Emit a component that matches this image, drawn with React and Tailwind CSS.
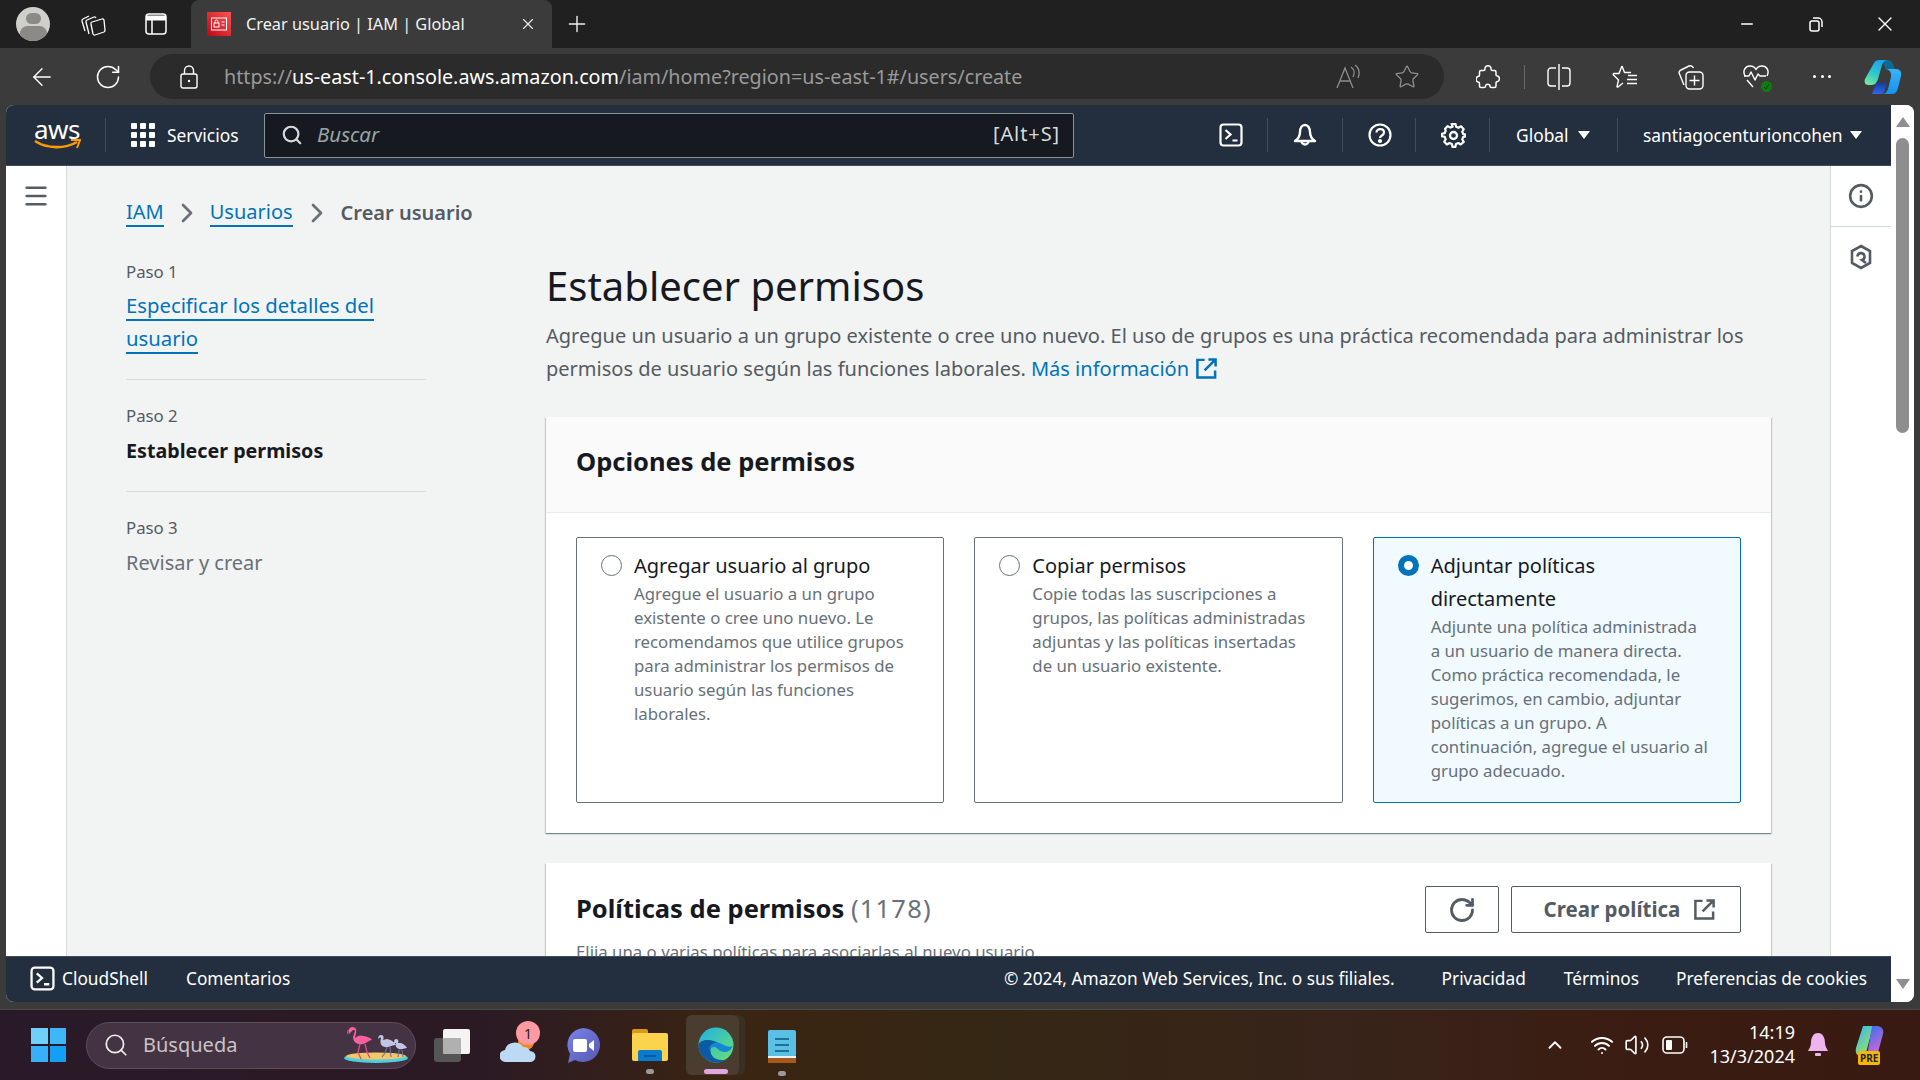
import React from 'react';
import { ArrowLeft, RotateCw, Star, X, Plus, Minus, Search, Menu, Info, Wifi, Volume2, ChevronUp, ChevronRight } from 'lucide-react';

const font = "font-['Noto_Sans','Open_Sans',sans-serif]";

function Divider({ className = '' }) {
  return <div className={`h-[34px] w-px shrink-0 bg-[#414d5c] ${className}`} />;
}

function Tri({ className = '' }) {
  return (
    <svg width="14" height="10" viewBox="0 0 14 10" className={`shrink-0 ${className}`}>
      <path d="M1 1h12L7 9z" fill="#fff" />
    </svg>
  );
}

function ShellIcon({ size = 24 }) {
  return (
    <svg width={size} height={size} viewBox="0 0 24 24" fill="none" stroke="#fff" strokeWidth="2.2">
      <rect x="1.500" y="1.500" width="21" height="21" rx="3" />
      <path d="M6.500 7 11.500 11.500 6.500 16M13.500 17.500h5" />
    </svg>
  );
}

function ExtIcon({ color, size = 24 }) {
  return (
    <svg width={size} height={size} viewBox="0 0 24 24" fill="none" stroke={color} strokeWidth="2.6" className="block">
      <path d="M10 3H2.500v18.500H21V14M14 2.500h7.500V10M21 3 10 14" />
    </svg>
  );
}

function TabStrip() {
  return (
    <div className="flex h-12 items-center bg-[#202020] text-white">
      <div className="ml-4 flex h-[34px] w-[34px] flex-col items-center overflow-hidden rounded-full bg-[#cfcfcb]">
        <div className="mt-[6px] h-[15px] w-[15px] rounded-full bg-[#8c8a86]" />
        <div className="mt-[2px] h-[20px] w-[27px] rounded-full bg-[#8c8a86]" />
      </div>
      <svg className="ml-[30px]" width="26" height="26" viewBox="0 0 26 26" fill="none" stroke="#fff" strokeWidth="1.3" strokeLinejoin="round">
        <path d="M5 20 2 10c-.3-1 0-1.500 1-2l6-3" />
        <path d="M9 23 6 11c-.3-1 0-1.500 1-2l7-3c1-.4 1.500 0 2 1" />
        <path d="M12 11l10-3c1-.3 1.500 0 2 1l1 10c0 1-.3 1.500-1 2l-9 3c-1 .3-1.500 0-2-1l-2-10c-.3-1 0-1.700 1-2z" />
      </svg>
      <svg className="ml-[39px]" width="22" height="22" viewBox="0 0 22 22" fill="none" stroke="#fff" strokeWidth="1.5">
        <rect x="1" y="1" width="20" height="20" rx="3" />
        <path d="M1 5h20" strokeWidth="5" />
        <path d="M7 7v14" />
      </svg>
      <div className="ml-[24px] flex h-12 w-[361px] items-center self-end rounded-t-lg bg-[#3b3b3b] pl-4">
        <svg width="24" height="24" viewBox="0 0 24 24">
          <defs><linearGradient id="fav" x1="0" y1="1" x2="1" y2="0"><stop offset="0" stopColor="#bd0816" /><stop offset="1" stopColor="#ff5252" /></linearGradient></defs>
          <rect width="24" height="24" fill="url(#fav)" />
          <rect x="4.500" y="6" width="15" height="12" fill="none" stroke="#fff" strokeWidth="1" />
          <rect x="7" y="11" width="5" height="4" fill="none" stroke="#fff" strokeWidth="1" />
          <path d="M8 11V9.500a1.500 1.500 0 0 1 3 0V11M14.500 10h3M14.500 13h3" fill="none" stroke="#fff" strokeWidth="1" />
        </svg>
        <span className="ml-[15px] whitespace-nowrap font-['Noto_Sans',sans-serif] text-[16.300px] text-[#f2f2f2]">Crear usuario | IAM | Global</span>
        <X className="ml-auto mr-[15px]" size={18} strokeWidth={1.5} color="#eee" />
      </div>
      <Plus className="ml-[12px]" size={26} strokeWidth={1.3} color="#eee" />
      <div className="ml-auto flex items-center">
        <Minus size={18} strokeWidth={2} color="#fff" />
        <svg className="ml-[51px]" width="18" height="18" viewBox="0 0 18 18" fill="none" stroke="#fff" strokeWidth="1.5">
          <rect x="3" y="6" width="9" height="10" rx="2" />
          <path d="M6 3h5a4 4 0 0 1 4 4v5" />
        </svg>
        <X className="ml-[48px] mr-[23px]" size={24} strokeWidth={1.4} color="#fff" />
      </div>
    </div>
  );
}

function Toolbar() {
  return (
    <div className="flex h-[57px] items-center bg-[#3b3b3b] text-white">
      <ArrowLeft className="ml-[28px]" size={28} strokeWidth={1.2} color="#fff" />
      <RotateCw className="ml-[38px]" size={28} strokeWidth={1.3} color="#fff" />
      <div className="ml-[28px] flex h-[45px] w-[1294px] shrink-0 items-center rounded-full bg-[#2b2b2b]">
        <svg className="ml-[30px]" width="18" height="24" viewBox="0 0 18 24" fill="none" stroke="#fff" strokeWidth="1.4">
          <rect x="1" y="9" width="16" height="14" rx="2" />
          <path d="M4.500 9V5.500a4.500 4.500 0 0 1 9 0V9" />
          <circle cx="9" cy="16" r="1.200" fill="#fff" stroke="none" />
        </svg>
        <span className="ml-[26px] whitespace-nowrap font-['Noto_Sans',sans-serif] text-[19.750px] text-[#9a9a9a]">
          https://<span className="text-white">us-east-1.console.aws.amazon.com</span>/iam/home?region=us-east-1#/users/create
        </span>
        <svg className="ml-auto" width="26" height="26" viewBox="0 0 26 26" fill="none" stroke="#8f8f8f" strokeWidth="1.3">
          <path d="M2 24 10 4l8 20M5 17h10M16 3c3 2 4 6 2 10M20 1c4 3 5 8 3 13" />
        </svg>
        <Star className="ml-[33px] mr-[24px]" size={26} strokeWidth={1.2} color="#8f8f8f" />
      </div>
      <svg className="ml-[32px]" width="24" height="26" viewBox="0 0 24 26" fill="none" stroke="#fff" strokeWidth="1.5" strokeLinejoin="round">
        <path d="M9 5c-.5-4.500 6.500-4.500 6 0 0 1 .5 1.500 1.500 1.500h2c1 0 1.500.5 1.500 1.500v3c0 1 .5 1 1.500 1 2.500.5 2.500 5 0 5.500-1 0-1.500.5-1.500 1.500v3c0 1-.5 1.500-1.500 1.500h-3c-1 0-1.500-.5-1.500-1 .5-3-5-3-4.500 0 0 .5-.5 1-1.500 1H5c-1 0-1.500-.5-1.500-1.500v-2.500c0-1-.5-1.500-1.500-1.500-2.500-.5-2.500-5 0-5.500 1 0 1.500-.5 1.500-1.500V8c0-1 .5-1.500 1.500-1.500h2.500c1 0 1.500-.5 1.500-1.500z" />
      </svg>
      <div className="ml-[24px] h-[24px] w-px bg-[#6a6a6a]" />
      <svg className="ml-[22px]" width="24" height="28" viewBox="0 0 24 28" fill="none" stroke="#fff" strokeWidth="1.4">
        <path d="M12 1v26M9 5H4a3 3 0 0 0-3 3v12a3 3 0 0 0 3 3h5M15 5h5a3 3 0 0 1 3 3v12a3 3 0 0 1-3 3h-5" />
      </svg>
      <svg className="ml-[41px]" width="26" height="26" viewBox="0 0 26 26" fill="none" stroke="#fff" strokeWidth="1.4" strokeLinejoin="round">
        <path d="M10 2l2.500 6.500H19M11 19l-5 4c-.5.300-1 0-1-.5l1.500-6.500L1.500 11c-.5-.5-.3-1.500.5-1.500h5L10 2" />
        <path d="M16 11.500h9M15 15.500h10M15 19.500h10" />
      </svg>
      <svg className="ml-[40px]" width="26" height="26" viewBox="0 0 26 26" fill="none" stroke="#fff" strokeWidth="1.4">
        <path d="M6 21 1.500 10c-1-2 0-3.500 1.500-4l8-4c2-.8 3.500 0 4.500 2" />
        <rect x="8" y="8" width="17" height="17" rx="3.500" />
        <path d="M16.500 11.500v10M11.500 16.500h10" />
      </svg>
      <div className="relative ml-[39px] h-[26px] w-[26px]">
        <svg width="26" height="26" viewBox="0 0 26 26" fill="none" stroke="#fff" strokeWidth="1.4" strokeLinejoin="round">
          <path d="M2 12C-1 6 3 2 7 2c3 0 5 1.500 6 3.500C14 3.500 16 2 19 2c4 0 8 4 5 10" />
          <path d="M1 12h5l2-4 4 8 3-6 2 2h6M4 16l6 7" />
        </svg>
        <div className="absolute bottom-[-2px] right-[-3px] flex h-[11px] w-[11px] items-center justify-center rounded-full bg-[#107c10]">
          <svg width="7" height="7" viewBox="0 0 7 7" fill="none" stroke="#0a3f0a" strokeWidth="1"><path d="M1 4l2 2 3-5" /></svg>
        </div>
      </div>
      <div className="ml-[44px] flex w-[18px] justify-between">
        <div className="h-[3px] w-[3px] rounded-full bg-white" />
        <div className="h-[3px] w-[3px] rounded-full bg-white" />
        <div className="h-[3px] w-[3px] rounded-full bg-white" />
      </div>
      <svg className="ml-[33px]" width="38" height="36" viewBox="0 0 38 36">
        <defs>
          <linearGradient id="cpa" x1="0.7" y1="0" x2="0.2" y2="1"><stop offset="0" stopColor="#1f9ff0" /><stop offset="0.55" stopColor="#30c8c8" /><stop offset="1" stopColor="#78e6a0" /></linearGradient>
          <linearGradient id="cpb" x1="0.5" y1="0" x2="0.5" y2="1"><stop offset="0" stopColor="#37b5f8" /><stop offset="1" stopColor="#1a90f0" /></linearGradient>
          <linearGradient id="cpc" x1="0.5" y1="0" x2="0.5" y2="1"><stop offset="0" stopColor="#0f3fa8" /><stop offset="1" stopColor="#3566e8" /></linearGradient>
        </defs>
        <path d="M18 1h6c3 0 5 3 6 7l1 3H22z" fill="#0e6a90" />
        <path d="M12 24h11l-3 9c-.5 1-1.500 2-3 2H8z" fill="url(#cpc)" />
        <path d="M10 4c1-2 3-3 5-3h9c-3 0-5 2-6 5l-4 14c-1 3-3 6-6 6H4c-3 0-4-3-3-6z" fill="url(#cpa)" />
        <path d="M23 10h9c4 0 6 3 5 7l-3 12c-1 4-3 6-6 6H18c3 0 5-2 6-5l3-12c.5-3 0-6-4-8z" fill="url(#cpb)" />
      </svg>
    </div>
  );
}

function AwsHeader() {
  return (
    <div className={`flex h-[61px] shrink-0 items-center border-b border-[#414d5c] bg-[#232f3e] text-white ${font}`}>
      <div className="ml-[27px] flex w-[48px] shrink-0 flex-col items-center">
        <span className="font-['Noto_Sans',sans-serif] text-[26px] leading-[20px] tracking-[-0.5px]">aws</span>
        <svg width="48" height="12" viewBox="0 0 48 12" fill="none">
          <path d="M2 2c12 8 30 8 42 1" stroke="#ff9900" strokeWidth="2.6" />
          <path d="M38 1h9l-3 8" stroke="#ff9900" strokeWidth="2" />
        </svg>
      </div>
      <Divider className="ml-[24px]" />
      <div className="ml-[25px] grid h-[24px] w-[24px] shrink-0 grid-cols-3 gap-[3px]">
        {Array.from({ length: 9 }).map((_, i) => <div key={i} className="rounded-[1px] bg-white" />)}
      </div>
      <span className="ml-[12px] w-[74px] shrink-0 text-[17.400px]">Servicios</span>
      <div className="ml-[23px] flex h-[45px] w-[810px] shrink-0 items-center rounded-[2px] border border-[#879596] bg-[#16191f]">
        <Search className="ml-[16px]" size={22} strokeWidth={2.4} color="#d5dbdb" />
        <span className="ml-[14px] pb-[2px] text-[20.500px] italic text-[#95a5a6]">Buscar</span>
        <span className="ml-auto mr-[13px] pb-[2px] text-[20px] tracking-[0.900px] text-[#d5dbdb]">[Alt+S]</span>
      </div>
      <div className="ml-[145px] h-[24px] w-[24px] shrink-0"><ShellIcon /></div>
      <Divider className="ml-[24px]" />
      <svg className="ml-[25px] shrink-0" width="24" height="25" viewBox="0 0 24 25" fill="none" stroke="#fff" strokeWidth="2.4" strokeLinejoin="round">
        <path d="M12 2c-3 0-5 3-5 7 0 4-2 7-5 9h20c-3-2-5-5-5-9 0-4-2-7-5-7z" />
        <path d="M8.500 18a3.500 3.500 0 0 0 7 0" />
      </svg>
      <Divider className="ml-[25px]" />
      <svg className="ml-[25px] shrink-0" width="24" height="24" viewBox="0 0 24 24" fill="none" stroke="#fff" strokeWidth="2.2">
        <circle cx="12" cy="12" r="10.500" />
        <path d="M8.500 9.500c0-4.500 7.500-4.500 7.500 0 0 3-4 3-4 5.500" />
        <circle cx="12" cy="18" r="1" fill="#fff" />
      </svg>
      <Divider className="ml-[23px]" />
      <svg className="ml-[25px] shrink-0" width="25" height="25" viewBox="0 0 25 25" fill="none" stroke="#fff" strokeWidth="2.300" strokeLinejoin="round">
        <path d="M10.500 1.500h4l.7 3 2.500 1 2.700-1.500 2.700 3-1.500 2.600 1 2.400 3 .7v1.600l-3 .7-1 2.500 1.500 2.700-3 2.700-2.500-1.500-2.500 1-.7 3h-2.900l-.7-3-2.500-1-2.600 1.500-2.800-2.800 1.500-2.600-1-2.500-3-.7v-2.600l3-.7 1-2.500L3.700 6.600l2.800-2.800 2.600 1.500 2.500-1z" transform="translate(0.500 -0.500) scale(0.96)" />
        <circle cx="12.500" cy="12.500" r="3.500" />
      </svg>
      <Divider className="ml-[23px]" />
      <span className="ml-[26px] w-[54px] shrink-0 text-[17.400px]">Global</span>
      <Tri className="ml-[7px]" />
      <Divider className="ml-[26px]" />
      <span className="ml-[25px] w-[199px] shrink-0 whitespace-nowrap text-[17.400px]">santiagocenturioncohen</span>
      <Tri className="ml-[7px]" />
    </div>
  );
}

function RadioCard({ title, lines, selected }) {
  return (
    <div className={`flex rounded-[2px] border pl-[24px] pt-[11px] ${selected ? 'border-[#0073bb] bg-[#f1faff]' : 'border-[#687078] bg-white'}`}>
      <div className={`mt-[6px] h-[21px] w-[21px] shrink-0 rounded-full ${selected ? 'border-[6px] border-[#0073bb] bg-white' : 'border border-[#687078] bg-white'}`} />
      <div className="ml-[12px]">
        <div className="text-[20px] leading-[33px] text-[#16191f]">
          {title.map((t) => <div key={t} className="whitespace-nowrap">{t}</div>)}
        </div>
        <div className="text-[16.800px] leading-[24px] text-[#687078]">
          {lines.map((t) => <div key={t} className="whitespace-nowrap">{t}</div>)}
        </div>
      </div>
    </div>
  );
}

function Main() {
  return (
    <div className="flex min-w-0 flex-1 flex-col overflow-hidden bg-[#f2f3f3] pl-[59px]">
      <div className="flex h-[94px] shrink-0 items-center text-[20px]">
        <span className="border-b-2 border-[#0073bb] leading-[26px] text-[#0073bb]">IAM</span>
        <ChevronRight className="mx-[7px]" size={32} strokeWidth={2} color="#687078" />
        <span className="border-b-2 border-[#0073bb] leading-[26px] text-[#0073bb]">Usuarios</span>
        <ChevronRight className="mx-[8px]" size={32} strokeWidth={2} color="#687078" />
        <span className="font-semibold text-[#545b64]">Crear usuario</span>
      </div>
      <div className="flex">
        <div className="w-[300px] shrink-0">
          <div className="text-[16.800px] leading-[24px] text-[#545b64]">Paso 1</div>
          <div className="mt-[5px] text-[20.300px] leading-[33px] text-[#0073bb]">
            <span className="border-b-2 border-[#0073bb]">Especificar los detalles del</span><br />
            <span className="border-b-2 border-[#0073bb]">usuario</span>
          </div>
          <div className="mt-[24px] h-px bg-[#d5dbdb]" />
          <div className="mt-[24px] text-[16.800px] leading-[24px] text-[#545b64]">Paso 2</div>
          <div className="mt-[6px] text-[19.700px] font-bold leading-[33px] text-[#16191f]">Establecer permisos</div>
          <div className="mt-[24px] h-px bg-[#d5dbdb]" />
          <div className="mt-[24px] text-[16.800px] leading-[24px] text-[#545b64]">Paso 3</div>
          <div className="mt-[6px] text-[20px] leading-[33px] text-[#687078]">Revisar y crear</div>
        </div>
        <div className="ml-[120px] w-[1225px] shrink-0">
          <h1 className="text-[40px] leading-[52px] text-[#16191f]">Establecer permisos</h1>
          <div className="mt-[7px] whitespace-nowrap text-[20.030px] leading-[33px] text-[#545b64]">
            <div>Agregue un usuario a un grupo existente o cree uno nuevo. El uso de grupos es una práctica recomendada para administrar los</div>
            <div className="flex h-[33px] items-center">
              <span>permisos de usuario según las funciones laborales.</span>
              <span className="ml-[5px] text-[#0073bb]">Más información</span>
              <span className="ml-[6px] flex"><ExtIcon color="#0073bb" size={23} /></span>
            </div>
          </div>
          <div className="mt-[32px] bg-white shadow-[0_1px_1px_0_rgba(0,28,36,0.3),1px_1px_1px_0_rgba(0,28,36,0.15),-1px_1px_1px_0_rgba(0,28,36,0.15)]">
            <div className="flex h-[96px] items-center border-b border-[#eaeded] bg-[#fafafa] pb-[6px] pl-[30px] text-[25.500px] font-bold text-[#16191f]">Opciones de permisos</div>
            <div className="grid h-[320px] grid-cols-3 gap-[30px] px-[30px] pb-[30px] pt-[24px]">
              <RadioCard title={['Agregar usuario al grupo']} lines={['Agregue el usuario a un grupo', 'existente o cree uno nuevo. Le', 'recomendamos que utilice grupos', 'para administrar los permisos de', 'usuario según las funciones', 'laborales.']} />
              <RadioCard title={['Copiar permisos']} lines={['Copie todas las suscripciones a', 'grupos, las políticas administradas', 'adjuntas y las políticas insertadas', 'de un usuario existente.']} />
              <RadioCard selected title={['Adjuntar políticas', 'directamente']} lines={['Adjunte una política administrada', 'a un usuario de manera directa.', 'Como práctica recomendada, le', 'sugerimos, en cambio, adjuntar', 'políticas a un grupo. A', 'continuación, agregue el usuario al', 'grupo adecuado.']} />
            </div>
          </div>
          <div className="mt-[30px] h-[200px] bg-white px-[30px] pt-[23px] shadow-[0_1px_1px_0_rgba(0,28,36,0.3),1px_1px_1px_0_rgba(0,28,36,0.15),-1px_1px_1px_0_rgba(0,28,36,0.15)]">
            <div className="flex items-center">
              <div className="pb-[2px] text-[25.500px] text-[#16191f]"><span className="font-bold">Políticas de permisos</span> <span className="tracking-[1.200px] text-[#687078]">(1178)</span></div>
              <div className="ml-auto flex h-[47px] w-[74px] items-center justify-center rounded-[2px] border border-[#545b64] bg-white">
                <RotateCw size={28} strokeWidth={2.4} color="#545b64" />
              </div>
              <div className="ml-[12px] flex h-[47px] w-[230px] items-center justify-center rounded-[2px] border border-[#545b64] bg-white pl-[8px] text-[20.500px] font-bold text-[#545b64]">
                Crear política
                <span className="ml-[13px] flex"><ExtIcon color="#545b64" size={23} /></span>
              </div>
            </div>
            <div className="mt-[7px] text-[16.800px] leading-[24px] text-[#687078]">Elija una o varias políticas para asociarlas al nuevo usuario.</div>
          </div>
        </div>
      </div>
    </div>
  );
}

function Footer() {
  return (
    <div className={`flex h-[46px] shrink-0 items-center border-t border-[#414d5c] bg-[#232f3e] pb-[2px] text-[17.300px] text-white ${font}`}>
      <div className="ml-[24px] h-[25px]"><ShellIcon size={25} /></div>
      <span className="ml-[7px]">CloudShell</span>
      <span className="ml-[38px]">Comentarios</span>
      <span className="ml-auto">© 2024, Amazon Web Services, Inc. o sus filiales.</span>
      <span className="ml-[47px]">Privacidad</span>
      <span className="ml-[38px]">Términos</span>
      <span className="ml-[37px] mr-[24px]">Preferencias de cookies</span>
    </div>
  );
}

function ScrollBar() {
  return (
    <div className="flex w-[23px] shrink-0 flex-col items-center bg-white pt-[11px]">
      <svg width="16" height="12" viewBox="0 0 16 12"><path d="M8 1l7 10H1z" fill="#8e8e8e" /></svg>
      <div className="mt-[10px] h-[295px] w-[13px] rounded-full bg-[#8e8e8e]" />
      <svg className="mb-[12px] mt-auto" width="16" height="12" viewBox="0 0 16 12"><path d="M1 1h14L8 11z" fill="#8e8e8e" /></svg>
    </div>
  );
}

function Window() {
  return (
    <div className="ml-[6px] flex h-[897px] w-[1908px] overflow-hidden rounded-lg bg-white">
      <div className="flex w-[1885px] flex-col">
        <AwsHeader />
        <div className={`flex min-h-0 flex-1 ${font}`}>
          <div className="flex w-[61px] shrink-0 justify-center border-r border-[#d5dbdb] bg-white pt-[16px]">
            <Menu size={28} strokeWidth={2.2} color="#545b64" />
          </div>
          <Main />
          <div className="w-[61px] shrink-0 border-l border-[#d5dbdb] bg-white">
            <div className="flex h-[61px] items-center justify-center border-b border-[#d5dbdb]">
              <Info size={26} strokeWidth={2.4} color="#545b64" />
            </div>
            <div className="mt-[17px] flex justify-center">
              <svg width="24" height="26" viewBox="0 0 24 26" fill="none" stroke="#545b64" strokeWidth="2.6">
                <path d="M12 2l9 5v12l-9 5-9-5V7z" />
                <path d="M8.500 12.500a3.500 3.500 0 1 1 4.500 3.500l4 3" />
              </svg>
            </div>
          </div>
        </div>
        <Footer />
      </div>
      <ScrollBar />
    </div>
  );
}

function Taskbar() {
  return (
    <div className="flex h-[70px] items-center bg-[linear-gradient(90deg,#2a1a29_0%,#2b1a24_25%,#3b2412_38%,#352714_50%,#38241a_70%,#3b1c12_85%,#381a12_100%)] text-white">
      <div className="ml-[31px] grid h-[34px] w-[35px] shrink-0 grid-cols-2 gap-[2px]">
        <div className="bg-[#6fd0fb]" /><div className="bg-[#3fb6fa]" />
        <div className="bg-[#36b0f8]" /><div className="bg-[#129ff5]" />
      </div>
      <div className="ml-[20px] flex h-[47px] w-[330px] shrink-0 items-center rounded-full border border-[#5d4e5d] bg-[#443343]">
        <Search className="ml-[16px]" size={26} strokeWidth={1.6} color="#eee" />
        <span className="ml-[14px] font-['Noto_Sans',sans-serif] text-[20px] text-[#c9c3c9]">Búsqueda</span>
        <svg className="ml-auto mr-[6px]" width="66" height="38" viewBox="0 0 66 38">
          <ellipse cx="33" cy="32" rx="32" ry="5" fill="#4fd0dc" />
          <ellipse cx="33" cy="30" rx="30" ry="3.500" fill="#f2c76a" />
          <path d="M8 3c-3 0-4 3-3 5" stroke="#ff5f9e" strokeWidth="1" fill="none" />
          <path d="M9 1c4 0 5 3 4 6l-1 5 3-2c6-1 13 2 14 4-3 0-5 3-9 4-6 1-10-2-10-7l2-6c0-1-1-1-2-1l-4 4c-1-4 1-7 3-7z" fill="#ff5f9e" />
          <path d="M17 18l-2 8 3 7M22 18l2 8 3 6" stroke="#e5487f" strokeWidth="1.300" fill="none" />
          <path d="M38 9c3 0 3 3 2 5l4-1c5 1 8 4 9 6-4 0-7 3-11 2-5-1-5-5-4-9-1-1-2 0-3 1 0-2 1-4 3-4z" fill="#c2c6e6" />
          <path d="M44 21l-2 6-3 4M47 21l1 10" stroke="#6c7299" strokeWidth="1.100" fill="none" />
          <path d="M53 13c2 0 3 2 2 4l3 0c3 1 5 3 6 5-3 0-5 2-8 1-3-1-4-3-3-6-1 0-2 0-2 1 0-2 0-5 2-5z" fill="#c2c6e6" />
          <path d="M56 24l-1 7M59 24l1 7" stroke="#6c7299" strokeWidth="1.100" fill="none" />
        </svg>
      </div>
      <div className="relative ml-[18px] h-[33px] w-[36px] shrink-0">
        <div className="absolute bottom-0 left-0 h-[24px] w-[27px] rounded-[3px] bg-[#555]" />
        <div className="absolute right-0 top-0 h-[25px] w-[27px] rounded-[2px] bg-[#f4f4f4]" />
        <div className="absolute left-[9px] top-[9px] h-[16px] w-[18px] rounded-[1px] bg-[#b0b0b0]" />
      </div>
      <div className="relative ml-[30px] h-[34px] w-[36px] shrink-0">
        <div className="absolute right-[2px] top-[6px] h-[16px] w-[16px] rounded-full bg-[#f5871f]" />
        <svg className="absolute bottom-0 left-0" width="36" height="21" viewBox="0 0 36 21">
          <path d="M6 21a6 6 0 0 1-1-12 10 10 0 0 1 18-3 7 7 0 0 1 7 4 5.500 5.500 0 0 1 0 11z" fill="#bcd9f6" />
        </svg>
        <div className="absolute left-[16px] top-[-7px] flex h-[24px] w-[24px] items-center justify-center rounded-full bg-[#ff9aa2] font-['Noto_Sans',sans-serif] text-[14px] text-[#222]">1</div>
      </div>
      <svg className="ml-[30px] shrink-0" width="34" height="35" viewBox="0 0 34 35">
        <defs><linearGradient id="mt" x1="0" y1="0" x2="1" y2="1"><stop offset="0" stopColor="#7b83eb" /><stop offset="1" stopColor="#5558af" /></linearGradient></defs>
        <path d="M17 0a17 17 0 1 1-8 32l-7 3 2-9A17 17 0 0 1 17 0z" fill="url(#mt)" />
        <rect x="7" y="11" width="14" height="13" rx="2" fill="#fff" />
        <path d="M23 16l5-4v11l-5-4z" fill="#fff" />
      </svg>
      <div className="relative ml-[32px] h-[32px] w-[36px] shrink-0">
        <div className="absolute left-0 top-0 h-[10px] w-[16px] rounded-t-[2px] bg-[#d79b17]" />
        <div className="absolute bottom-0 left-0 right-0 top-[4px] rounded-[2px] bg-[#fcd34d]" />
        <div className="absolute bottom-0 left-[6px] h-[11px] w-[24px] rounded-t-[2px] bg-[#0a7cd0]" />
        <div className="absolute bottom-[4px] left-[12px] h-[2px] w-[12px] bg-[#075a98]" />
        <div className="absolute -bottom-[13px] left-[14px] h-[5px] w-[8px] rounded-full bg-[#9a9a9a]" />
      </div>
      <div className="relative ml-[18px] h-[60px] w-[59px] shrink-0">
        <div className="absolute bottom-0 right-0 top-0 w-[20px] rounded-md bg-[#3a2f24]" />
        <div className="absolute inset-y-0 left-0 flex w-[53px] items-center rounded-md bg-[#4a3d2f] pl-[12px]">
          <svg width="36" height="36" viewBox="0 0 36 36">
            <defs>
              <linearGradient id="ed1" x1="0" y1="0" x2="1" y2="1"><stop offset="0" stopColor="#1fb0e8" /><stop offset="1" stopColor="#6be26c" /></linearGradient>
            </defs>
            <circle cx="18" cy="18" r="17.500" fill="url(#ed1)" />
            <path d="M.5 18c0 10 8 17.500 18 17.500 5 0 8-2 9-3-8 2-15-2-15-9 0-4 3-7 8-7-5-5-19-5-20 1.500z" fill="#0c59a4" />
            <path d="M11 23c0-6 6-10 13-6 3 2 11 5 11 0 0 0-1 8-8 8-6 0-8-5-11-5-2 0-4 1-5 3z" fill="#1386d4" />
          </svg>
        </div>
        <div className="absolute bottom-[1px] left-[18px] h-[5px] w-[24px] rounded-full bg-[#e3a5e0]" />
      </div>
      <div className="relative ml-[23px] h-[35px] w-[28px] shrink-0">
        <div className="absolute inset-x-0 bottom-[6px] top-[2px] rounded-[2px] bg-[#5bc0e6]" />
        <div className="absolute inset-x-0 bottom-[5px] h-[2px] bg-[#e8f4f8]" />
        <div className="absolute inset-x-0 bottom-0 h-[5px] bg-[#a55a1a]" />
        <div className="absolute inset-x-[7px] top-[10px] h-[2px] bg-[#1f6f96]" />
        <div className="absolute inset-x-[7px] top-[16px] h-[2px] bg-[#1f6f96]" />
        <div className="absolute inset-x-[7px] top-[22px] h-[2px] bg-[#1f6f96]" />
        <div className="absolute -bottom-[13px] left-[10px] h-[5px] w-[8px] rounded-full bg-[#9a9a9a]" />
      </div>
      <ChevronUp className="ml-[748px] shrink-0" size={22} strokeWidth={2} color="#fff" />
      <Wifi className="ml-[24px] shrink-0" size={24} strokeWidth={2} color="#fff" />
      <Volume2 className="ml-[10px] shrink-0" size={26} strokeWidth={1.5} color="#fff" />
      <svg className="ml-[12px] shrink-0" width="26" height="18" viewBox="0 0 26 18" fill="none" stroke="#fff" strokeWidth="1.6">
        <rect x="1" y="1" width="21" height="16" rx="4" />
        <rect x="4" y="4" width="6" height="10" rx="1" fill="#fff" stroke="none" />
        <path d="M24.500 6v6" />
      </svg>
      <div className="w-[107px] shrink-0 pb-[2px] text-right font-['Noto_Sans',sans-serif] text-[18px] leading-[24px] text-white">
        <div>14:19</div>
        <div>13/3/2024</div>
      </div>
      <svg className="ml-[12px] shrink-0" width="22" height="26" viewBox="0 0 22 26">
        <path d="M11 1c-5 0-7 5-7 10 0 3-2 6-3 8h20c-1-2-3-5-3-8 0-5-2-10-7-10z" fill="#eeb4ef" />
        <rect x="8" y="21" width="6" height="3" rx="1" fill="#eeb4ef" />
      </svg>
      <div className="relative ml-[26px] h-[40px] w-[30px] shrink-0">
        <svg width="30" height="34" viewBox="0 0 30 34">
          <defs>
            <linearGradient id="cq" x1="0" y1="0" x2="0.6" y2="1"><stop offset="0" stopColor="#2fb8f0" /><stop offset="1" stopColor="#9ae070" /></linearGradient>
            <linearGradient id="cr" x1="0.3" y1="0" x2="0.7" y2="1"><stop offset="0" stopColor="#3f6fe8" /><stop offset="1" stopColor="#e066d8" /></linearGradient>
          </defs>
          <path d="M8 1h10L11 28c-.5 2-2 3-5 3-4 0-6-3-5-8z" fill="url(#cq)" />
          <path d="M17 1h5c5 0 7 4 6 8l-6 22H12z" fill="url(#cr)" />
        </svg>
        <div className="absolute bottom-0 left-[3px] rounded-[2px] bg-[#f5b800] px-[2px] font-['Noto_Sans',sans-serif] text-[10px] font-bold leading-[14px] text-[#222]">PRE</div>
      </div>
    </div>
  );
}

export default function App() {
  return (
    <div className="flex h-[1080px] w-[1920px] flex-col overflow-hidden bg-[#3b3b3b]">
      <TabStrip />
      <Toolbar />
      <Window />
      <div className="h-[8px] shrink-0 border-b border-[#4a4a4a]" />
      <Taskbar />
    </div>
  );
}
